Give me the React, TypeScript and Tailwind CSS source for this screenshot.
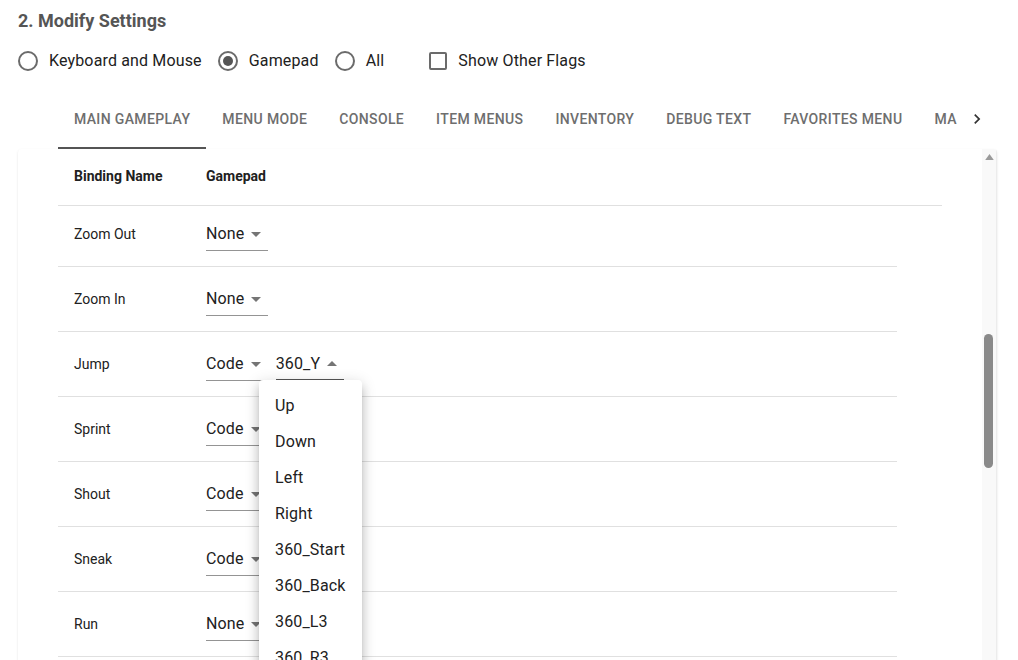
import React from "react";

const font = { fontFamily: "Roboto, 'Noto Sans', Arial, sans-serif" };

function Radio({ checked }: { checked?: boolean }) {
  return (
    <span className="relative flex h-[20px] w-[20px] items-center justify-center rounded-full border-2 border-[#6b6b6b]">
      {checked && <span className="h-[10px] w-[10px] rounded-full bg-[#555555]" />}
    </span>
  );
}

function Select({ value, open, hidden }: { value: string; open?: boolean; hidden?: boolean }) {
  return (
    <div
      className={`relative inline-flex pt-[4px] pr-[24px] text-[16px] leading-[23px] tracking-[0.15px] text-[#212121] ${
        open ? "pb-[4px] border-b-2 border-[#555555]" : "pb-[5px] border-b border-[#949494]"
      } ${hidden ? "invisible" : ""}`}
    >
      <span>{value}</span>
      <svg
        viewBox="0 0 24 24"
        className="absolute right-0 top-[4px] h-[24px] w-[24px]"
        fill="#757575"
      >
        {open ? <path d="M7 14l5-5 5 5z" /> : <path d="M7 10l5 5 5-5z" />}
      </svg>
    </div>
  );
}

const tabs = [
  "MAIN GAMEPLAY",
  "MENU MODE",
  "CONSOLE",
  "ITEM MENUS",
  "INVENTORY",
  "DEBUG TEXT",
  "FAVORITES MENU",
  "MAP MENU",
];

type Row = { name: string; sel: string; second?: string; open?: boolean };
const rows: Row[] = [
  { name: "Zoom Out", sel: "None" },
  { name: "Zoom In", sel: "None" },
  { name: "Jump", sel: "Code", second: "360_Y", open: true },
  { name: "Sprint", sel: "Code", second: "360_B" },
  { name: "Shout", sel: "Code", second: "360_X" },
  { name: "Sneak", sel: "Code", second: "360_A" },
  { name: "Run", sel: "None" },
  { name: "Toggle Run", sel: "None" },
];

const menuItems = ["Up", "Down", "Left", "Right", "360_Start", "360_Back", "360_L3", "360_R3", "360_LB"];

export default function App() {
  return (
    <div style={font} className="relative h-[660px] w-[1018px] overflow-hidden bg-white">
      <div className="flex flex-col px-[18px] pt-[7px]">
        <div className="text-[18px] font-bold leading-[28px] text-[#555555]">2. Modify Settings</div>

        <div className="mt-[5px] flex h-[42px] items-center text-[16px] tracking-[0.15px] text-[#212121]">
          <Radio />
          <span className="ml-[11px] mr-[16px]">Keyboard and Mouse</span>
          <Radio checked />
          <span className="ml-[11px] mr-[16px]">Gamepad</span>
          <Radio />
          <span className="ml-[11px]">All</span>
          <span className="ml-[45px] h-[18px] w-[18px] rounded-[2px] border-2 border-[#6b6b6b]" />
          <span className="ml-[11px]">Show Other Flags</span>
        </div>

        <div className="mt-[16px] flex h-[51px] w-[979px]">
          <div className="w-[40px] shrink-0" />
          <div className="flex min-w-0 flex-1 overflow-hidden">
            {tabs.map((t, i) => (
              <div
                key={t}
                className={`flex shrink-0 flex-col px-[16px] pt-[11px] text-[14px] font-medium leading-[20px] tracking-[0.36px] text-[#6e6e6e] ${
                  i === 0 ? "border-b-2 border-[#555555]" : ""
                }`}
              >
                {t}
              </div>
            ))}
          </div>
          <div className="flex w-[40px] shrink-0 items-start justify-center pt-[11px]">
            <svg viewBox="0 0 24 24" className="h-[20px] w-[20px]" fill="#333333">
              <path d="M8.59 16.59 13.17 12 8.59 7.41 10 6l6 6-6 6z" />
            </svg>
          </div>
        </div>

        <div className="flex h-[540px] w-[979px] overflow-hidden rounded-[4px] bg-white shadow-[0px_2px_1px_-1px_rgba(0,0,0,0.12),0px_1px_1px_0px_rgba(0,0,0,0.08),0px_1px_3px_0px_rgba(0,0,0,0.08)]">
          <div className="flex min-w-0 flex-1 flex-col pl-[40px]">
            <div className="flex h-[57px] w-[884px] shrink-0 items-center border-b border-[#e0e0e0] pb-[1px] text-[14px] font-bold text-[#212121]">
              <div className="w-[148px] pl-[16px]">Binding Name</div>
              <div>Gamepad</div>
            </div>
            <div className="flex-1 overflow-hidden">
              <div className="-mt-[4px] flex flex-col">
                {rows.map((r) => (
                  <div
                    key={r.name}
                    className="flex h-[65px] w-[839px] shrink-0 items-center border-b border-[#e0e0e0] text-[14px] text-[#212121]"
                  >
                    <div className="w-[148px] pl-[16px]">{r.name}</div>
                    <div className="flex items-center gap-[8px]">
                      <Select value={r.sel} />
                      {r.second && <Select value={r.second} open={r.open} hidden={!r.open} />}
                    </div>
                  </div>
                ))}
              </div>
            </div>
          </div>
          <div className="flex w-[15px] shrink-0 flex-col border-r border-[#ececec] bg-[#f9f9f9]">
            <div className="flex h-[15px] items-center justify-center pt-[1px]">
              <svg viewBox="0 0 10 7" className="h-[6px] w-[9px]" fill="#9a9a9a">
                <path d="M0 7 5 0 10 7z" />
              </svg>
            </div>
            <div className="ml-[2px] mt-[170px] h-[134px] w-[9px] rounded-full bg-[#8a8a8a]" />
          </div>
        </div>
      </div>

      <div className="absolute left-[259px] top-[380px] w-[103px] rounded-[4px] bg-white py-[8px] shadow-[0px_5px_5px_-3px_rgba(0,0,0,0.2),0px_8px_10px_1px_rgba(0,0,0,0.14),0px_3px_14px_2px_rgba(0,0,0,0.12)]">
        {menuItems.map((m) => (
          <div key={m} className="px-[16px] py-[6px] text-[16px] leading-[24px] tracking-[0.15px] text-[#212121]">
            {m}
          </div>
        ))}
      </div>
    </div>
  );
}
